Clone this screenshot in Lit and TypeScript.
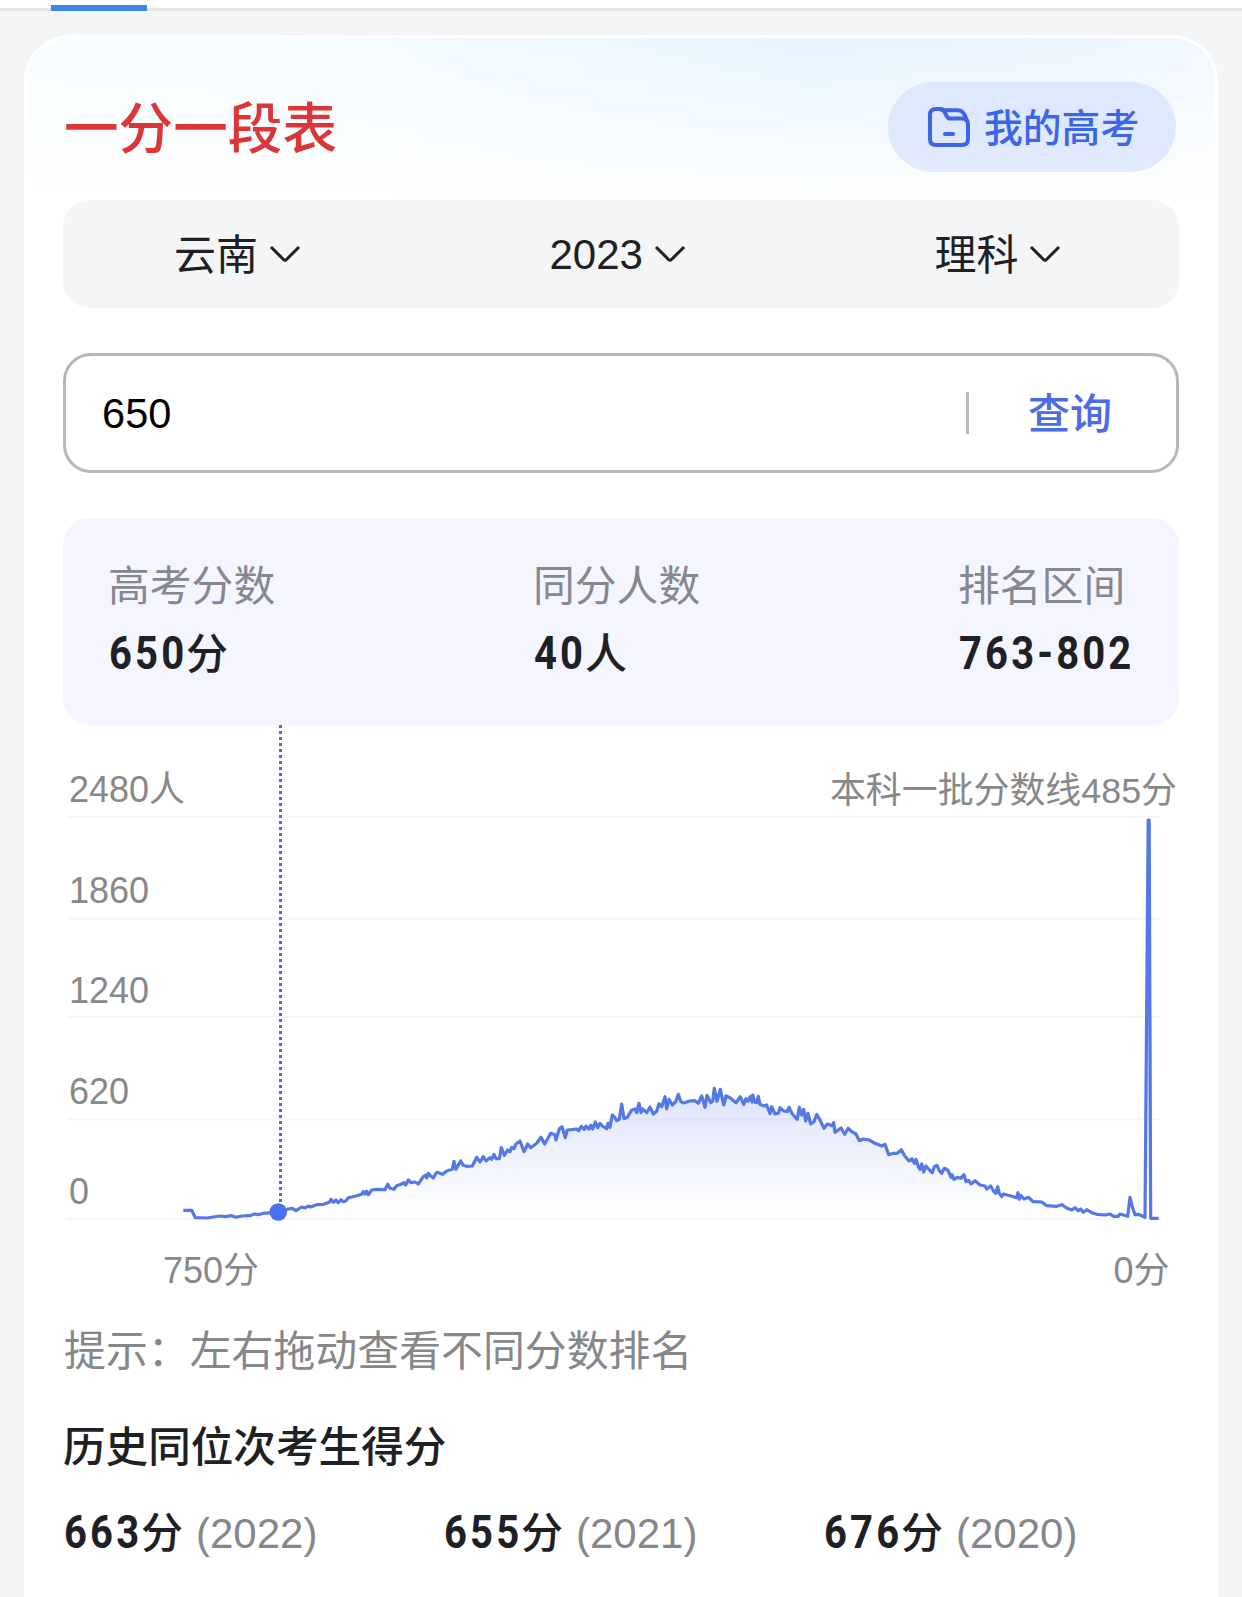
import { LitElement, html, svg, css } from "lit";
import { customElement } from "lit/decorators.js";

// Outline of the score distribution in three runs: x origin in pixels, then points in thirds of a pixel.
const SEGMENTS: [number, string][] = [
  [40, "430,451 455,451 466,473 500,474 520,471 540,468 557,470 575,467 588,472 605,468 630,467 643,462 655,464 670,460 715,456 745,447 757,445 768,452 785,441 795,444 805,438 812,441 830,434 850,433 868,427 873,418 880,427 888,420 895,428 903,419 910,425 918,422 925,413 945,409 965,403 970,395 975,402 980,394 985,404 995,390 1010,388 1035,389 1043,373 1050,385 1062,388 1070,377 1085,372 1092,368 1097,375 1105,360 1113,368 1125,366 1135,372 1150,350 1158,345 1160,354 1165,340 1172,348 1180,354 1190,337"],
  [440, "0,340 8,343 20,333 37,328 42,304 48,328 62,303 70,316 80,319 97,318 110,292 120,306 130,290 138,303 150,293 155,298 162,283 168,296 178,296 184,263 193,286 203,270 210,275 215,262 222,266 228,252 240,243 252,275 263,252 272,263 290,250 303,232 314,252 332,220 345,224 348,240 358,206 366,200 376,233 382,210 395,209 410,207 416,212 424,199 433,208 438,199 447,207 452,196 458,207 466,186 473,203 480,190 487,198 500,206 504,190 510,202 517,165 524,172 530,182 538,178 545,132 552,176 562,172 575,150 585,147 590,158 597,130 603,158 608,147 620,158 630,141 640,162 650,154 657,131 665,140 675,110 680,147 687,118 697,135 707,125 715,103 722,124 730,129 750,123 765,122 775,130 785,108 795,142 801,106 812,128 818,124 823,85 831,124 841,88 851,135 858,108 870,113 888,128 901,110 911,133 918,116 924,124 930,110 936,126 938,105 944,126 950,128 955,109 960,133 972,138 980,135 990,161 995,140 1005,162 1015,160 1020,143 1030,152 1042,155 1047,142 1057,162 1072,178 1078,142 1085,165 1091,148 1097,183 1104,160 1112,192 1122,185 1130,163"],
  [820, "0,180 12,205 22,192 37,197 41,188 45,217 63,204 74,223 85,205 95,215 108,222 118,242 130,237 148,240 165,250 185,258 195,253 206,284 220,280 232,280 244,269 255,289 267,303 276,296 283,310 288,298 295,320 300,328 305,312 311,336 318,318 330,332 337,338 343,320 351,316 358,332 365,340 373,325 383,330 387,338 393,352 396,344 402,358 412,352 422,355 432,344 438,365 446,361 453,372 465,362 480,375 495,378 500,387 512,378 522,395 527,400 533,380 538,400 545,410 550,402 570,407 590,413 594,398 598,418 602,406 612,417 625,412 640,425 665,426 680,437 710,439 725,434 740,444 755,450 765,443 775,452 782,447 790,457 800,449 815,458 830,463 855,465 870,462 880,469 895,469 900,462 923,469 930,412 937,440 945,464 955,463 975,472 984.5,-720 987.5,-720 992,475 1016,475"],
];

const POINTS = SEGMENTS.flatMap(([origin, pts]) =>
  pts.split(" ").map((p) => {
    const [x, y] = p.split(",").map(Number);
    return `${(origin - 24 + x / 3).toFixed(1)},${(335 + y / 3).toFixed(1)}`;
  })
);
const LINE = POINTS.join(" ");
const AREA = `159.3,494 ${LINE} 1134.7,494`;

const Y_AXIS = [
  { label: "2480人", y: 92, base: 77 },
  { label: "1860", y: 193.5, base: 178 },
  { label: "1240", y: 292, base: 278 },
  { label: "620", y: 394.3, base: 379 },
  { label: "0", y: 493.8, base: 479.3 },
];

@customElement("app-root")
export class AppRoot extends LitElement {
  static styles = css`
    :host {
      display: block;
      height: 1597px;
      overflow: hidden;
      background: #f4f5f7;
      color: #1f2024;
      font-family: "Liberation Sans", "Noto Sans CJK SC", sans-serif;
      font-size: 42px;
    }
    * { box-sizing: border-box; }
    .tabs {
      height: 11px;
      background: #fff;
      border-bottom: 3px solid #e5e5e6;
    }
    .tab-ink {
      position: relative;
      top: 5px;
      width: 96px;
      height: 6px;
      margin-left: 51px;
      background: #3b86e6;
    }
    .card {
      margin: 24px 24px 0;
      height: 1600px;
      border: 3px solid #fff;
      border-radius: 46px 46px 0 0;
      padding: 44px 36px 0;
      background:
        linear-gradient(180deg, rgba(255, 255, 255, 0) 0, #fff 168px),
        linear-gradient(90deg, #f8fdff 0, #f5fcff 30%, #e5f5ff 66%, #ecf6ff 88%, #f2f8ff 100%);
    }
    .head {
      display: flex;
      justify-content: space-between;
      align-items: center;
      height: 90px;
      padding-right: 3px;
    }
    .title {
      margin: 0;
      padding: 6px 0 0 1px;
      font-size: 54.6px;
      line-height: 80px;
      font-weight: 500;
      color: #dd3638;
    }
    .mine {
      display: flex;
      align-items: center;
      gap: 13px;
      width: 288px;
      height: 90px;
      padding-left: 39px;
      border-radius: 45px;
      background: linear-gradient(180deg, #dbe8ff, #e2eafd);
      color: #3c66e6;
      font-size: 38.8px;
      line-height: 56px;
      font-weight: 500;
      white-space: nowrap;
    }
    .mine svg { display: block; }
    .mine span { padding-top: 4px; }
    .filters {
      display: flex;
      align-items: center;
      gap: 248.5px;
      height: 108px;
      margin-top: 28px;
      padding-left: 111px;
      border-radius: 27px;
      background: #f4f5f7;
    }
    .filter {
      display: flex;
      align-items: center;
      gap: 11px;
      white-space: nowrap;
      line-height: 60px;
    }
    .filter span { padding-top: 3px; }
    .filter .latin { padding-top: 2px; }
    .search {
      display: flex;
      align-items: center;
      height: 120px;
      margin-top: 45px;
      padding-left: 36px;
      border: 3px solid #b7b7b7;
      border-radius: 28px;
      background: #fff;
    }
    .query { flex: 1; padding-top: 2px; font-size: 41.6px; color: #000; }
    .bar {
      width: 3px;
      height: 42px;
      background: #b9b9b9;
    }
    .go {
      width: 207px;
      padding: 4px 0 0 59px;
      color: #4d6be4;
      font-weight: 500;
      line-height: 60px;
    }
    .summary {
      display: grid;
      grid-template-columns: 425px 425px auto;
      height: 207px;
      margin-top: 45px;
      padding: 39px 0 0 45px;
      border-radius: 27px;
      background: #f4f5ff;
    }
    .label { color: #86878f; font-size: 41.8px; line-height: 60px; }
    .value {
      display: flex;
      align-items: baseline;
      font-weight: 500;
      line-height: 60px;
      white-space: nowrap;
    }
    .summary .value { margin-top: 6px; }
    .num {
      font-family: Roboto, sans-serif;
      font-size: 46px;
      font-weight: 700;
      letter-spacing: 3.6px;
      transform: translateX(1px) scaleX(0.87);
      transform-origin: 0 50%;
    }
    .three { width: 78px; }
    .two { width: 52px; }
    .chart {
      display: block;
      width: 1194px;
      height: 580px;
      margin-left: -39px;
      font-size: 36px;
      fill: #888;
    }
    .tip { margin-top: 17px; padding-left: 1px; color: #86878b; font-size: 41.9px; line-height: 60px; }
    .history-title {
      margin: 35px 0 0;
      font-size: 42.6px;
      font-weight: 500;
      line-height: 60px;
    }
    .history {
      display: grid;
      grid-template-columns: 380px 380px auto;
      margin-top: 25px;
    }
    .year { margin-left: 13px; color: #86878b; font-weight: 400; }
  `;

  private chevron() {
    return html`<svg width="32" height="18" viewBox="0 0 32 18" fill="none" stroke="#1f2024" stroke-width="3">
      <path d="M2 2 L14.5 14.5 Q16 16 17.5 14.5 L30 2" />
    </svg>`;
  }

  private chart() {
    return html`<svg class="chart" viewBox="0 0 1194 580">
      <defs>
        <linearGradient id="fill" gradientUnits="userSpaceOnUse" x1="0" y1="360" x2="0" y2="490">
          <stop offset="0" stop-color="#5470e8" stop-opacity="0.2" />
          <stop offset="1" stop-color="#5470e8" stop-opacity="0" />
        </linearGradient>
      </defs>
      ${Y_AXIS.map(
        (row) => svg`
          <line x1="43" x2="1136" y1=${row.y} y2=${row.y} stroke="#f6f6f7" stroke-width="2" />
          <text x="45" y=${row.base}>${row.label}</text>`
      )}
      <text x="1153" y="78" text-anchor="end" font-size="35.9">本科一批分数线485分</text>
      <polygon points=${AREA} fill="url(#fill)" />
      <polyline points=${LINE} fill="none" stroke="#5478e6" stroke-width="3.2" stroke-linejoin="round" />
      <line x1="256.5" x2="256.5" y1="0" y2="480" stroke="#5a6cc8" stroke-width="3" stroke-dasharray="3 3" />
      <circle cx="254.3" cy="487" r="8.8" fill="#4c6ef0" />
      <text x="139" y="558">750分</text>
      <text x="1089.5" y="558">0分</text>
    </svg>`;
  }

  render() {
    return html`
      <div class="tabs"><div class="tab-ink"></div></div>
      <main class="card">
        <header class="head">
          <h1 class="title">一分一段表</h1>
          <div class="mine">
            <svg width="44" height="42" viewBox="0 0 44 42" fill="none" stroke="#3c66e6" stroke-width="4" stroke-linejoin="round" stroke-linecap="round">
              <path d="M9 3 H14 Q16 3 17 5 L20 10.5 Q21 12.5 23 12.5 H35 Q41 12.5 41 18.5 V33 Q41 39 35 39 H9 Q3 39 3 33 V9 Q3 3 9 3 Z" />
              <path d="M15 4.2 H31 Q37 4.2 39.5 14" />
              <path d="M18 28 H26" />
            </svg>
            <span>我的高考</span>
          </div>
        </header>
        <section class="filters">
          <div class="filter"><span>云南</span>${this.chevron()}</div>
          <div class="filter"><span class="latin">2023</span>${this.chevron()}</div>
          <div class="filter"><span>理科</span>${this.chevron()}</div>
        </section>
        <section class="search">
          <span class="query">650</span>
          <span class="bar"></span>
          <span class="go">查询</span>
        </section>
        <section class="summary">
          <div>
            <div class="label">高考分数</div>
            <div class="value"><span class="num three">650</span>分</div>
          </div>
          <div>
            <div class="label">同分人数</div>
            <div class="value"><span class="num two">40</span>人</div>
          </div>
          <div>
            <div class="label">排名区间</div>
            <div class="value"><span class="num">763-802</span></div>
          </div>
        </section>
        ${this.chart()}
        <div class="tip">提示：左右拖动查看不同分数排名</div>
        <h2 class="history-title">历史同位次考生得分</h2>
        <section class="history">
          ${[["663", "2022"], ["655", "2021"], ["676", "2020"]].map(
            ([score, year]) => html`<div class="value">
              <span class="num three">${score}</span>分<span class="year">(${year})</span>
            </div>`
          )}
        </section>
      </main>
    `;
  }
}
